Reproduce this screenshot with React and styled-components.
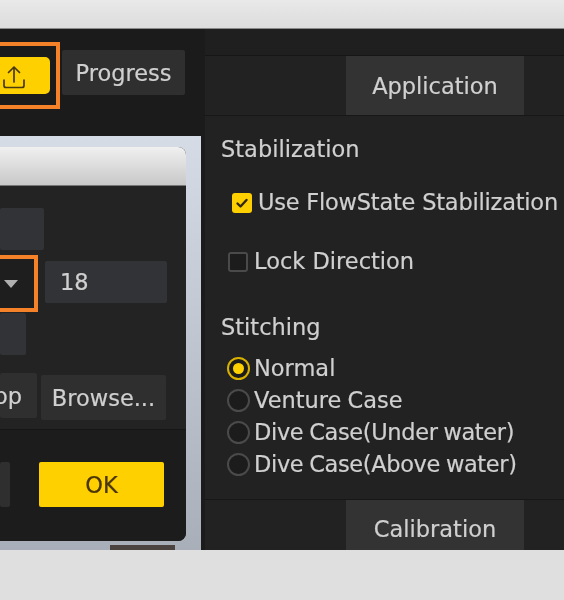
import styled, { createGlobalStyle } from 'styled-components';

const Global = createGlobalStyle`
  html, body { margin: 0; padding: 0; background: #dfdfdf; }
  body { font-family: "DejaVu Sans", "Liberation Sans", sans-serif; }
`;

const Page = styled.div`
  width: 564px;
  height: 600px;
  display: flex;
  flex-direction: column;
  overflow: hidden;
  filter: blur(0.35px);
`;

const TopBand = styled.div`
  height: 28px;
  flex-shrink: 0;
  background: linear-gradient(#e9e9e9, #dcdcdc);
  border-bottom: 1px solid #8a8a8a;
`;

const BottomBand = styled.div`
  height: 50px;
  flex-shrink: 0;
  background: #dfdfdf;
`;

const Main = styled.div`
  height: 521px;
  flex-shrink: 0;
  display: flex;
  background: #1b1b1b;
  color: #d0d0d0;
  font-size: 22.5px;
  -webkit-text-stroke: 0.2px;
`;

const LeftPane = styled.div`
  width: 205px;
  flex-shrink: 0;
  display: flex;
  flex-direction: column;
  overflow: hidden;
`;

const Toolbar = styled.div`
  height: 107px;
  flex-shrink: 0;
  box-sizing: border-box;
  padding: 13px 20px 0 0;
  display: flex;
  justify-content: flex-end;
  align-items: flex-start;
  gap: 2px;
`;

const Highlight = styled.div`
  box-sizing: border-box;
  width: 80px;
  height: ${p => p.$height}px;
  flex-shrink: 0;
  border: 4px solid #f58229;
  display: flex;
  align-items: center;
  background: ${p => p.$bg || 'transparent'};
`;

const UploadButton = styled.div`
  width: 66px;
  height: 37px;
  background: #ffd000;
  border-radius: 5px;
  display: flex;
  align-items: center;
  justify-content: flex-end;
  padding: 3px 24px 0 0;
  flex-shrink: 0;
  box-sizing: border-box;
`;

const ProgressButton = styled.div`
  width: 123px;
  height: 45px;
  margin-top: 8px;
  background: #2f2f2f;
  border-radius: 2px;
  display: flex;
  align-items: center;
  justify-content: center;
  flex-shrink: 0;
`;

const Backdrop = styled.div`
  flex: 1;
  width: 201px;
  box-sizing: border-box;
  padding-top: 11px;
  background: linear-gradient(#d6dce6, #a9afb9);
`;

const Dialog = styled.div`
  width: 186px;
  height: 394px;
  display: flex;
  flex-direction: column;
  background: #232323;
  border-radius: 0 8px 8px 0;
  overflow: hidden;
`;

const ImageEdge = styled.div`
  width: 65px;
  height: 5px;
  margin: 4px 0 0 110px;
  background: #4a4340;
`;

const DialogTitle = styled.div`
  height: 38px;
  flex-shrink: 0;
  background: linear-gradient(#f0f0f0, #c8c8c8);
  border-bottom: 1px solid #777;
`;

const DialogForm = styled.div`
  height: 244px;
  flex-shrink: 0;
  box-sizing: border-box;
  padding-top: 22px;
  display: flex;
  flex-direction: column;
  border-bottom: 1px solid #161616;
`;

const FormRow = styled.div`
  display: flex;
  align-items: flex-start;
  height: ${p => p.$height}px;
  flex-shrink: 0;
`;

const Field = styled.div`
  box-sizing: border-box;
  width: ${p => p.$width}px;
  height: 42px;
  margin: ${p => p.$top || 0}px 0 0 ${p => p.$left || 0}px;
  flex-shrink: 0;
  background: #323336;
  border-radius: 2px;
  display: flex;
  align-items: center;
  padding-left: 15px;
`;

const SelectBox = styled(Highlight)`
  width: 59px;
  margin-left: -21px;
  justify-content: flex-end;
  padding-right: 16px;
`;

const Caret = styled.div`
  width: 0;
  height: 0;
  border-left: 7px solid transparent;
  border-right: 7px solid transparent;
  border-top: 8px solid #b0b0b0;
`;

const GreyButton = styled.div`
  box-sizing: border-box;
  width: ${p => p.$width}px;
  height: 45px;
  margin: ${p => p.$top || 0}px 0 0 ${p => p.$left || 0}px;
  flex-shrink: 0;
  background: #2f2f2f;
  border-radius: 2px;
  display: flex;
  align-items: center;
  justify-content: ${p => p.$justify || 'center'};
  padding-right: ${p => p.$padRight || 0}px;
`;

const DialogFooter = styled.div`
  flex: 1;
  background: #1c1c1c;
  display: flex;
  align-items: flex-start;
  padding-top: 32px;
`;

const OkButton = styled.div`
  width: 125px;
  height: 45px;
  margin-left: 29px;
  background: #ffd000;
  color: #4a3506;
  border-radius: 2px;
  display: flex;
  align-items: center;
  justify-content: center;
`;

const RightPane = styled.div`
  flex: 1;
  display: flex;
  flex-direction: column;
  background: #222;
  overflow: hidden;
`;

const HeaderStrip = styled.div`
  height: 26px;
  flex-shrink: 0;
  background: #1f1f1f;
  border-bottom: 1px solid #161616;
`;

const TabBar = styled.div`
  height: ${p => p.$height}px;
  flex-shrink: 0;
  box-sizing: border-box;
  padding-left: 141px;
  border-bottom: ${p => (p.$line ? '1px solid #171717' : 'none')};
  border-top: ${p => (p.$top ? '1px solid #171717' : 'none')};
`;

const Tab = styled.div`
  width: 178px;
  height: 100%;
  background: #333;
  display: flex;
  align-items: ${p => p.$align || 'center'};
  justify-content: center;
  padding-top: ${p => p.$pad || 0}px;
  box-sizing: border-box;
`;

const Settings = styled.div`
  flex: 1;
  box-sizing: border-box;
  padding: 18px 0 0 16px;
  display: flex;
  flex-direction: column;
`;

const Heading = styled.div`
  line-height: 30px;
  margin-top: ${p => p.$top || 0}px;
`;

const CheckRow = styled.div`
  display: flex;
  align-items: center;
  height: 30px;
  gap: ${p => p.$gap}px;
  margin-top: ${p => p.$top}px;
  margin-left: ${p => p.$left}px;
  white-space: nowrap;
  letter-spacing: ${p => (p.$tight ? '-0.22px' : '0')};
`;

const CheckBox = styled.div`
  box-sizing: border-box;
  width: 20px;
  height: 20px;
  margin-top: 2px;
  border-radius: 3px;
  flex-shrink: 0;
  display: flex;
  align-items: center;
  justify-content: center;
  background: ${p => (p.$on ? '#ffd000' : '#1c1c1c')};
  border: ${p => (p.$on ? 'none' : '2px solid #4a4a4a')};
`;

const RadioList = styled.div`
  display: flex;
  flex-direction: column;
  margin: 10px 0 0 6px;
`;

const RadioRow = styled.div`
  display: flex;
  align-items: center;
  gap: 4px;
  height: 32px;
  white-space: nowrap;
  word-spacing: -1px;
  letter-spacing: ${p => (p.$tight ? '-0.35px' : '0')};
`;

const Radio = styled.div`
  box-sizing: border-box;
  width: 23px;
  height: 23px;
  border-radius: 50%;
  flex-shrink: 0;
  background: #1c1c1c;
  border: 2px solid ${p => (p.$on ? '#d9b100' : '#4a4a4a')};
  display: flex;
  align-items: center;
  justify-content: center;
  &::after {
    content: '';
    display: ${p => (p.$on ? 'block' : 'none')};
    width: 11px;
    height: 11px;
    border-radius: 50%;
    background: #ffd000;
  }
`;

const UploadIcon = () => (
  <svg width="24" height="26" viewBox="0 0 24 26" fill="none" stroke="#4a3a10" strokeWidth="1.7" strokeLinecap="round" strokeLinejoin="round">
    <path d="M12 18V3M6.5 8.5 12 3l5.5 5.5" />
    <path d="M2 16v5.5a2 2 0 0 0 2 2h16a2 2 0 0 0 2-2V16" />
  </svg>
);

const CheckIcon = () => (
  <svg width="14" height="12" viewBox="0 0 14 12" fill="none" stroke="#33290a" strokeWidth="2.4" strokeLinecap="round" strokeLinejoin="round">
    <path d="M2.5 6.5 5.5 9.5 11.5 3" />
  </svg>
);

const stitching = [
  { label: 'Normal', on: true },
  { label: 'Venture Case' },
  { label: 'Dive Case(Under water)', tight: true },
  { label: 'Dive Case(Above water)', tight: true },
];

export default function App() {
  return (
    <Page>
      <Global />
      <TopBand />
      <Main>
        <LeftPane>
          <Toolbar>
            <Highlight $height={67}>
              <UploadButton>
                <UploadIcon />
              </UploadButton>
            </Highlight>
            <ProgressButton>Progress</ProgressButton>
          </Toolbar>
          <Backdrop>
            <Dialog>
              <DialogTitle />
              <DialogForm>
                <FormRow $height={47}>
                  <Field $width={44} />
                </FormRow>
                <FormRow $height={58}>
                  <SelectBox $height={57} $bg="#1e1e1e">
                    <Caret />
                  </SelectBox>
                  <Field $width={122} $left={7} $top={6}>18</Field>
                </FormRow>
                <FormRow $height={60}>
                  <Field $width={26} />
                </FormRow>
                <FormRow $height={47}>
                  <GreyButton $width={37} $justify="flex-end" $padRight={15}>pp</GreyButton>
                  <GreyButton $width={125} $left={4} $top={2}>Browse...</GreyButton>
                </FormRow>
              </DialogForm>
              <DialogFooter>
                <GreyButton $width={10} />
                <OkButton>OK</OkButton>
              </DialogFooter>
            </Dialog>
            <ImageEdge />
          </Backdrop>
        </LeftPane>
        <RightPane>
          <HeaderStrip />
          <TabBar $height={60} $line>
            <Tab>Application</Tab>
          </TabBar>
          <Settings>
            <Heading>Stabilization</Heading>
            <CheckRow $gap={6} $top={23} $left={11} $tight>
              <CheckBox $on><CheckIcon /></CheckBox>
              Use FlowState Stabilization
            </CheckRow>
            <CheckRow $gap={6} $top={29} $left={7}>
              <CheckBox />
              Lock Direction
            </CheckRow>
            <Heading $top={36}>Stitching</Heading>
            <RadioList>
              {stitching.map(item => (
                <RadioRow key={item.label} $tight={item.tight}>
                  <Radio $on={item.on} />
                  {item.label}
                </RadioRow>
              ))}
            </RadioList>
          </Settings>
          <TabBar $height={51} $top>
            <Tab $align="flex-start" $pad={16}>Calibration</Tab>
          </TabBar>
        </RightPane>
      </Main>
      <BottomBand />
    </Page>
  );
}
